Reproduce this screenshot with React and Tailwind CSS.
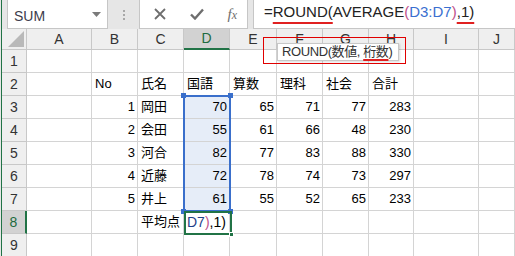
const FONT = { fontFamily: '"Liberation Sans", "Noto Sans CJK JP", sans-serif' };

const headers = ["A", "B", "C", "D", "E", "F", "G", "H", "I", "J"];

const rows = [
  [],
  [null, "No", "氏名", "国語", "算数", "理科", "社会", "合計"],
  [null, 1, "岡田", 70, 65, 71, 77, 283],
  [null, 2, "会田", 55, 61, 66, 48, 230],
  [null, 3, "河合", 82, 77, 83, 88, 330],
  [null, 4, "近藤", 72, 78, 74, 73, 297],
  [null, 5, "井上", 61, 55, 52, 65, 233],
  [null, null, "平均点", "__edit"],
  [],
];

function Formula() {
  return (
    <>
      <span>=</span>
      <span className="underline decoration-[#e02020] decoration-2 underline-offset-[5px]">ROUND(</span>
      <span>AVERAGE</span>
      <span className="text-[#c0508a]">(</span>
      <span className="text-[#3a6fd0]">D3:D7</span>
      <span className="text-[#c0508a]">)</span>
      <span className="underline decoration-[#e02020] decoration-2 underline-offset-[5px]">,1)</span>
    </>
  );
}

function Cell({ value, col, row }) {
  const isNum = typeof value === "number";
  const inSel = col === 3 && row >= 3 && row <= 7;
  if (value === "__edit") {
    return (
      <div className="flex items-center border-r border-b border-[#d4d4d4] bg-white pl-[3px] text-[14px]">
        <span className="text-[#1f3f8a]">D7</span>
        <span className="text-[#c0508a]">)</span>
        <span>,1)</span>
      </div>
    );
  }
  return (
    <div
      className={`flex items-center overflow-visible whitespace-nowrap border-r border-b border-[#d4d4d4] text-[13px] text-black ${
        isNum ? "justify-end pr-[2px]" : "pl-[3px]"
      } ${inSel ? "bg-[#e6edf8]" : "bg-white"}`}
    >
      {value ?? ""}
    </div>
  );
}

export default function App() {
  return (
    <div className="relative flex h-[256px] w-[515px] overflow-hidden bg-[#e6e6e6]" style={FONT}>
      <div className="w-px" />
      <div className="w-px bg-[#217346]" />

      <div className="flex flex-1 flex-col">
        {/* formula bar */}
        <div className="flex h-[40px] items-start pl-[5px]">
          <div className="flex h-[29px] w-[101px] items-center justify-between border border-t-0 border-[#c6c6c6] bg-white pl-[6px] pr-[6px] pt-[5px]">
            <span className="text-[14px] text-[#3c3c4c]">SUM</span>
            <svg width="9" height="5" viewBox="0 0 9 5" className="mb-[4px]">
              <path d="M0 0h9L4.5 5z" fill="#7a7a7a" />
            </svg>
          </div>
          <div className="flex h-[29px] w-[31px] flex-col items-center justify-center gap-[2px]">
            <div className="h-[2px] w-[2px] bg-[#a8a8a8]" />
            <div className="h-[2px] w-[2px] bg-[#a8a8a8]" />
            <div className="h-[2px] w-[2px] bg-[#a8a8a8]" />
          </div>
          <div className="flex h-[29px] w-[109px] items-center justify-between border border-t-0 border-[#c6c6c6] bg-white pl-[14px] pr-[10px]">
            <svg width="12" height="12" viewBox="0 0 12 12">
              <path d="M1 1l10 10M11 1L1 11" stroke="#6e6e6e" strokeWidth="1.8" />
            </svg>
            <svg width="14" height="12" viewBox="0 0 14 12">
              <path d="M1 6.5l4 4L13 1.5" stroke="#6e6e6e" strokeWidth="2.4" fill="none" />
            </svg>
            <span
              className="text-[15px] italic text-[#6e6e6e]"
              style={{ fontFamily: '"Liberation Serif", serif' }}
            >
              f<span className="text-[12px]">x</span>
            </span>
          </div>
          <div className="ml-[5px] flex h-[29px] flex-1 items-center border border-t-0 border-r-0 border-[#c6c6c6] bg-white pb-[3px] pl-[10px] text-[15px] text-[#222]">
            <Formula />
          </div>
        </div>

        {/* sheet grid */}
        <div className="relative grid grid-cols-[25px_65px_46px_46px_46px_47px_46px_46px_45px_65px_1fr] grid-rows-[21px_repeat(9,23px)] bg-white">
          <div className="relative border-r border-b border-[#c8c8c8] bg-[#efefef]">
            <svg width="16" height="16" viewBox="0 0 16 16" className="absolute right-[2px] bottom-[2px]">
              <path d="M16 0V16H0z" fill="#b9b9b9" />
            </svg>
          </div>
          {headers.map((h, i) => (
            <div
              key={h}
              className={`flex items-center justify-center border-r text-[14px] ${
                i === 3
                  ? "border-b-2 border-r-[#c8c8c8] border-b-[#217346] bg-[#d2d2d2] text-[#1e6b40]"
                  : "border-b border-[#c8c8c8] bg-[#efefef] text-[#333]"
              }`}
            >
              {h}
            </div>
          ))}

          {rows.map((r, ri) => {
            const rowNo = ri + 1;
            return [
              <div
                key={`h${rowNo}`}
                className={`flex items-center justify-center border-b text-[14px] ${
                  rowNo === 8
                    ? "border-r-2 border-r-[#217346] border-b-[#c8c8c8] bg-[#d2d2d2] text-[#1e6b40]"
                    : "border-r border-[#c8c8c8] bg-[#efefef] text-[#333]"
                }`}
              >
                {rowNo}
              </div>,
              ...headers.map((h, ci) => (
                <Cell key={`${rowNo}${h}`} value={r[ci]} col={ci} row={rowNo} />
              )),
            ];
          })}

          {/* reference range D3:D7 */}
          <div className="absolute left-[181px] top-[66px] h-[117px] w-[48px] border-2 border-[#3a6fcb]">
            <div className="absolute -left-[4px] -top-[4px] h-[5px] w-[5px] bg-[#3a6fcb]" />
            <div className="absolute -right-[4px] -top-[4px] h-[5px] w-[5px] bg-[#3a6fcb]" />
            <div className="absolute -left-[4px] -bottom-[4px] h-[5px] w-[5px] bg-[#3a6fcb]" />
            <div className="absolute -right-[4px] -bottom-[4px] h-[5px] w-[5px] bg-[#3a6fcb]" />
          </div>

          {/* active cell D8 */}
          <div className="absolute left-[182px] top-[182px] h-[24px] w-[48px] border-2 border-[#217346]">
            <div className="absolute -right-[4px] -bottom-[4px] h-[5px] w-[5px] border border-white bg-[#217346]" />
          </div>
        </div>
      </div>

      {/* function tooltip */}
      <div className="absolute left-[263px] top-[37px] h-[27px] w-[143px] border border-[#e00000]" />
      <div className="absolute left-[277px] top-[43px] flex h-[18px] w-[122px] items-center whitespace-nowrap border border-[#c8c8c8] bg-white pl-[4px] text-[13px] tracking-[-0.4px] text-[#333] shadow-[1px_1px_2px_rgba(0,0,0,0.15)]">
        ROUND(数値,&nbsp;
        <span className="underline decoration-[#e02020] decoration-2 underline-offset-[3px]">桁数</span>)
      </div>
    </div>
  );
}
